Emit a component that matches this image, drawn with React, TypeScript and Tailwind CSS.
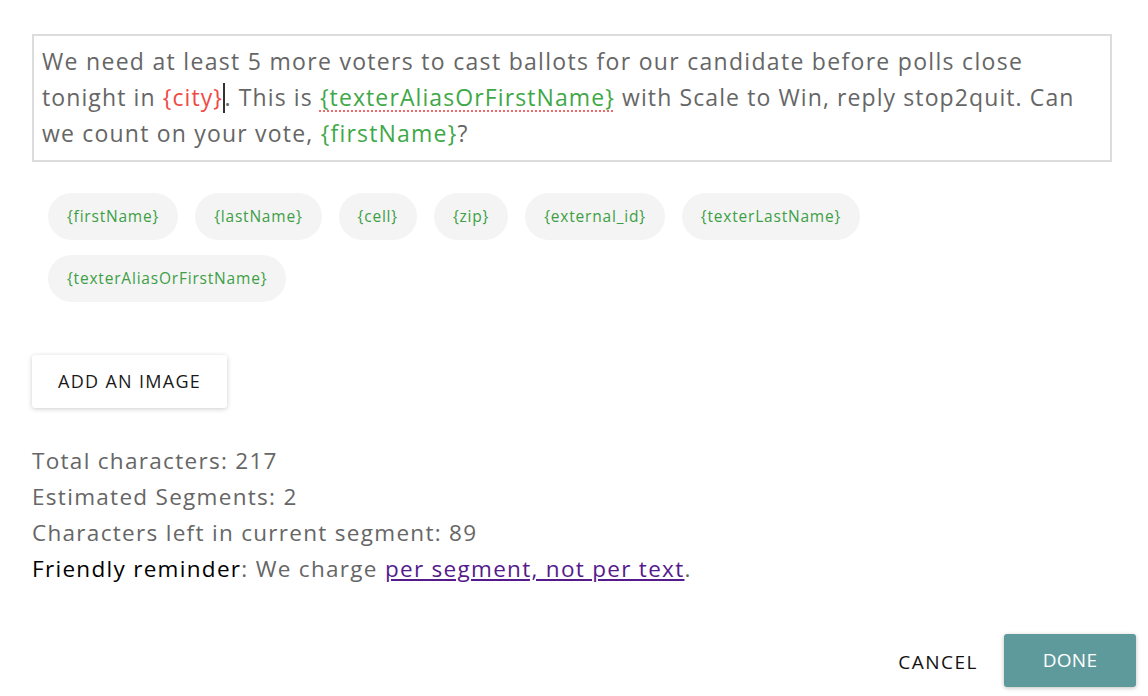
import React from 'react';

const chips = [
  '{firstName}',
  '{lastName}',
  '{cell}',
  '{zip}',
  '{external_id}',
  '{texterLastName}',
  '{texterAliasOrFirstName}',
];

export default function App(): JSX.Element {
  return (
    <div
      className="w-[1148px] h-[696px] bg-white pl-8 pr-3 pt-[34px] text-[#666666] flex flex-col"
      style={{ fontFamily: '"Open Sans", sans-serif' }}
    >
      {/* script text box */}
      <div className="w-[1080px] h-[128px] border-2 border-[#dcdcdc] px-2 pt-[7px] text-[23px] leading-[36px] tracking-[1.2px]">
        <div className="whitespace-nowrap tracking-[1.3px]">
          We need at least 5 more voters to cast ballots for our candidate before polls close
        </div>
        <div className="whitespace-nowrap tracking-[1.1px]">
          tonight in <span className="text-[#ef4b45]">{'{city}'}</span>
          <span className="inline-block w-[1.5px] h-[30px] bg-[#333] align-middle -mt-1" />. This is{' '}
          <span className="text-[#3fa847] underline decoration-dotted decoration-[#f06a6a] decoration-2 underline-offset-4">
            {'{texterAliasOrFirstName}'}
          </span>{' '}
          with Scale to Win, reply stop2quit. Can
        </div>
        <div className="whitespace-nowrap">
          we count on your vote, <span className="text-[#3fa847]">{'{firstName}'}</span>?
        </div>
      </div>

      {/* custom field chips */}
      <div className="flex flex-wrap gap-x-[17px] gap-y-[15px] pl-4 pr-[230px] mt-[31px]">
        {chips.map((c) => (
          <span
            key={c}
            className="h-[47px] px-[19px] rounded-full bg-[#f4f4f4] text-[#3d9f45] text-[15.5px] tracking-[0.8px] flex items-center"
          >
            {c}
          </span>
        ))}
      </div>

      <div className="mt-[53px]">
        <button className="h-[53px] px-[26px] bg-white rounded-[3px] shadow-[0_1px_5px_rgba(0,0,0,0.2)] text-[18px] text-[#1a1a1a] tracking-[1.3px]">
          ADD AN IMAGE
        </button>
      </div>

      {/* counts */}
      <div className="mt-[35px] text-[22.5px] leading-[36px] tracking-[1.3px]">
        <div>Total characters: 217</div>
        <div>Estimated Segments: 2</div>
        <div>Characters left in current segment: 89</div>
        <div>
          <span className="text-black">Friendly reminder</span>: We charge{' '}
          <a href="#" className="text-[#551a8b] underline underline-offset-2">
            per segment, not per text
          </a>
          .
        </div>
      </div>

      <div className="flex justify-end items-center gap-[26px] mt-[47px]">
        <button className="text-[19px] text-[#111] tracking-[1.5px] pt-[3px]">CANCEL</button>
        <button className="w-[132px] h-[53px] bg-[#5e9a9c] rounded-[3px] text-white text-[19px] tracking-[0.3px] shadow-[0_1px_4px_rgba(0,0,0,0.25)]">
          DONE
        </button>
      </div>
    </div>
  );
}
